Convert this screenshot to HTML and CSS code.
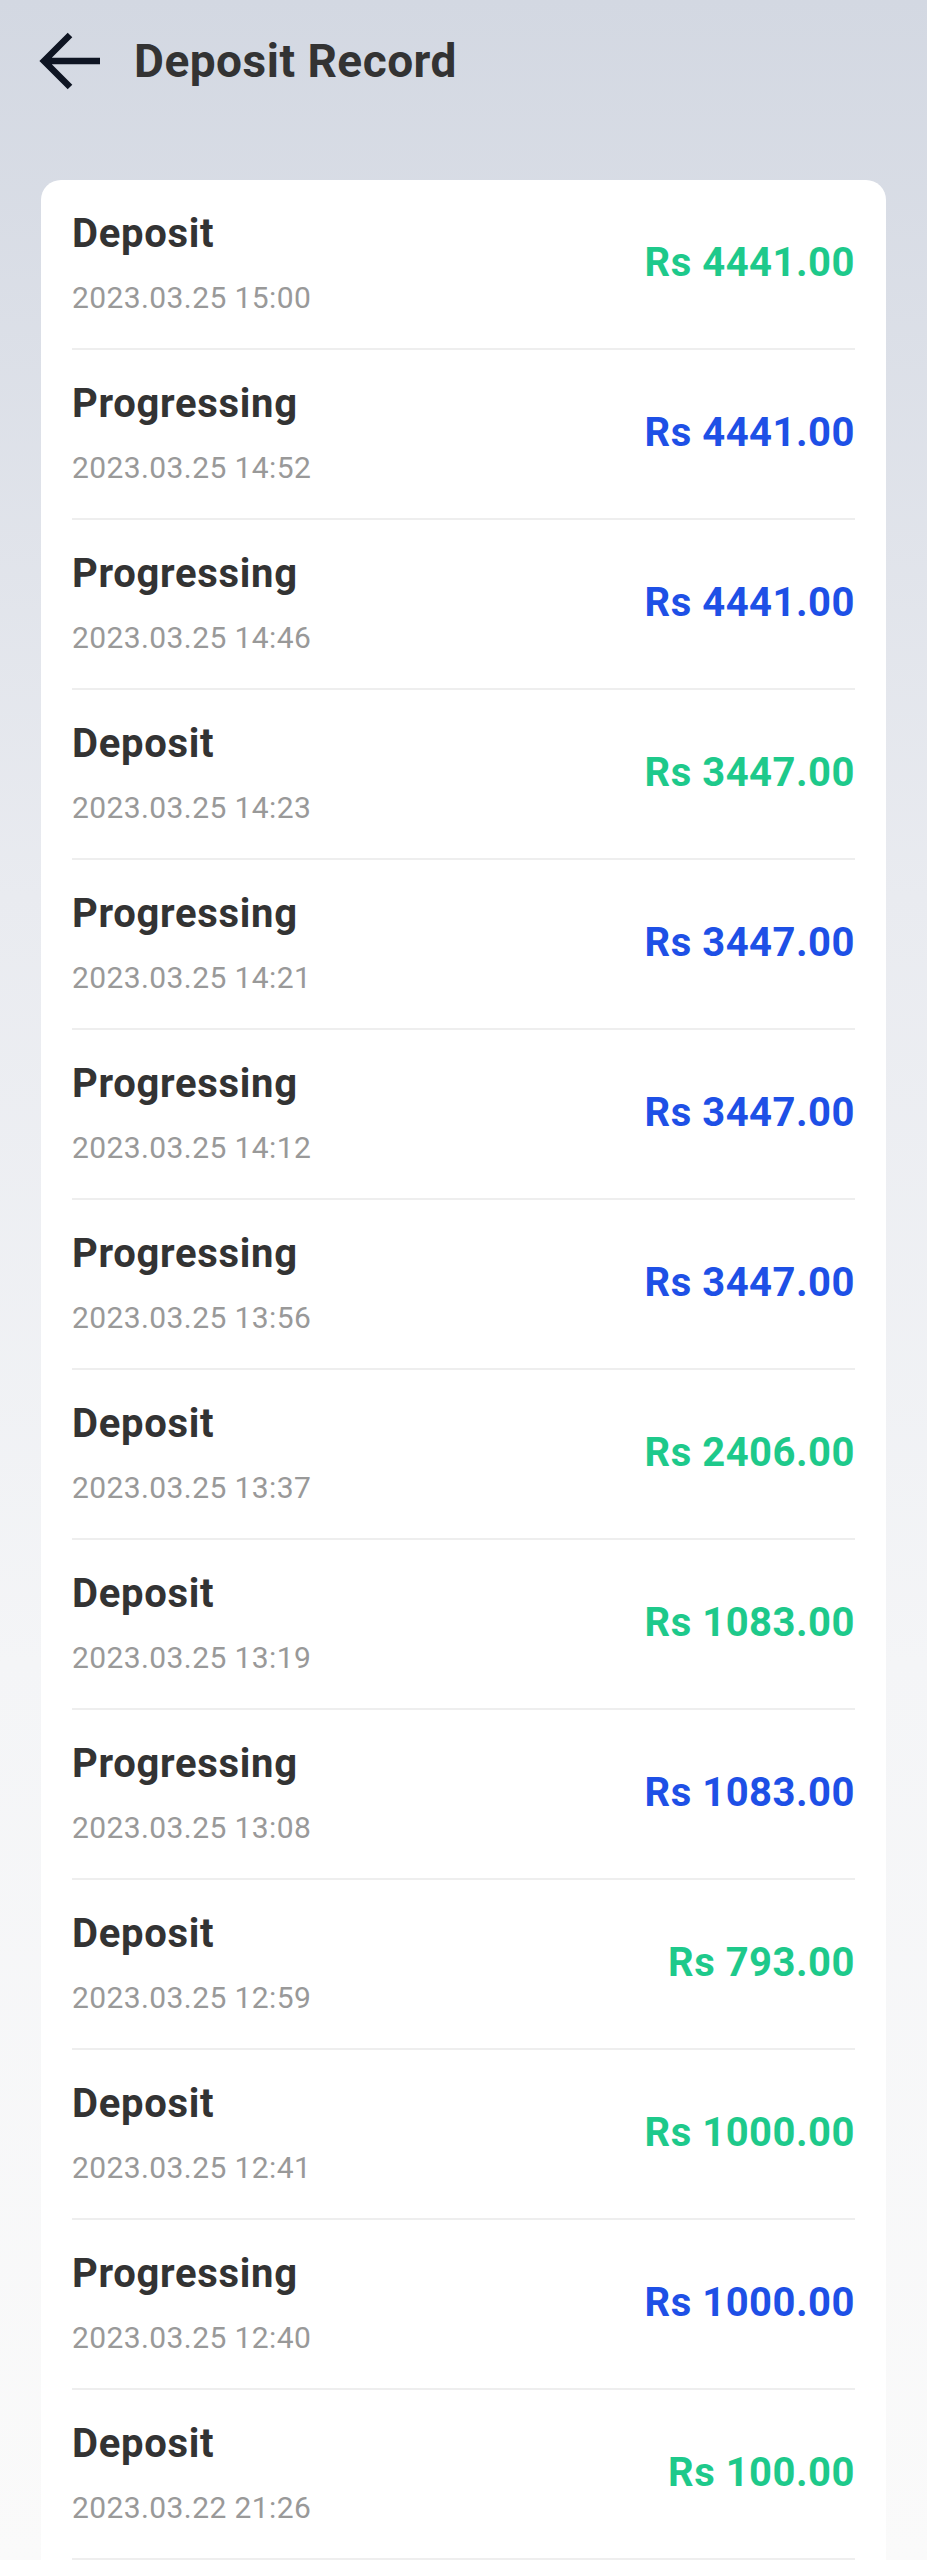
FILE: index.html
```html
<!DOCTYPE html>
<html lang="en">
<head>
<meta charset="utf-8">
<title>Deposit Record</title>
<link rel="stylesheet" href="styles.css">
</head>
<body>
<div class="page">
  <header class="topbar">
    <svg class="back" viewBox="0 0 62 60" width="62" height="60" aria-hidden="true">
      <path d="M32 4 L6 30 L32 56 M6 30 H62" fill="none" stroke="#0f1523" stroke-width="6.5" stroke-linejoin="miter"/>
    </svg>
    <h1 class="title">Deposit Record</h1>
  </header>
  <main class="card">
    <div class="row"><div class="info"><div class="kind">Deposit</div><div class="date">2023.03.25 15:00</div></div><div class="amount green">Rs 4441.00</div></div>
    <div class="row"><div class="info"><div class="kind">Progressing</div><div class="date">2023.03.25 14:52</div></div><div class="amount blue">Rs 4441.00</div></div>
    <div class="row"><div class="info"><div class="kind">Progressing</div><div class="date">2023.03.25 14:46</div></div><div class="amount blue">Rs 4441.00</div></div>
    <div class="row"><div class="info"><div class="kind">Deposit</div><div class="date">2023.03.25 14:23</div></div><div class="amount green">Rs 3447.00</div></div>
    <div class="row"><div class="info"><div class="kind">Progressing</div><div class="date">2023.03.25 14:21</div></div><div class="amount blue">Rs 3447.00</div></div>
    <div class="row"><div class="info"><div class="kind">Progressing</div><div class="date">2023.03.25 14:12</div></div><div class="amount blue">Rs 3447.00</div></div>
    <div class="row"><div class="info"><div class="kind">Progressing</div><div class="date">2023.03.25 13:56</div></div><div class="amount blue">Rs 3447.00</div></div>
    <div class="row"><div class="info"><div class="kind">Deposit</div><div class="date">2023.03.25 13:37</div></div><div class="amount green">Rs 2406.00</div></div>
    <div class="row"><div class="info"><div class="kind">Deposit</div><div class="date">2023.03.25 13:19</div></div><div class="amount green">Rs 1083.00</div></div>
    <div class="row"><div class="info"><div class="kind">Progressing</div><div class="date">2023.03.25 13:08</div></div><div class="amount blue">Rs 1083.00</div></div>
    <div class="row"><div class="info"><div class="kind">Deposit</div><div class="date">2023.03.25 12:59</div></div><div class="amount green">Rs 793.00</div></div>
    <div class="row"><div class="info"><div class="kind">Deposit</div><div class="date">2023.03.25 12:41</div></div><div class="amount green">Rs 1000.00</div></div>
    <div class="row"><div class="info"><div class="kind">Progressing</div><div class="date">2023.03.25 12:40</div></div><div class="amount blue">Rs 1000.00</div></div>
    <div class="row"><div class="info"><div class="kind">Deposit</div><div class="date">2023.03.22 21:26</div></div><div class="amount green">Rs 100.00</div></div>
  </main>
</div>
</body>
</html>
```

FILE: styles.css
```css
* { box-sizing: border-box; }
html, body { margin: 0; padding: 0; }
body {
  font-family: Roboto, "Liberation Sans", Arial, sans-serif;
  background: linear-gradient(180deg, #d3d8e2 0%, #e9ebf0 35%, #f4f5f7 65%, #fafafa 100%);
  min-height: 2560px;
}
.page { height: 2560px; overflow: hidden; }
.topbar {
  height: 122px;
  display: flex;
  align-items: center;
  padding-left: 38px;
  gap: 34px;
}
.back { display: block; flex: none; }
.title {
  margin: 0;
  font-size: 46px;
  line-height: 54px;
  font-weight: 700;
  color: #333333;
  letter-spacing: 0.5px;
}
.card {
  margin: 58px 41px 0;
  background: #ffffff;
  border-radius: 20px 20px 0 0;
  padding: 0 31px;
}
.row {
  height: 170px;
  border-bottom: 2px solid #eeeeee;
  display: flex;
  align-items: center;
  justify-content: space-between;
  padding: 0 0 2px;
}
.info { display: flex; flex-direction: column; }
.kind {
  font-size: 40px;
  line-height: 48px;
  font-weight: 700;
  color: #333333;
  letter-spacing: 0.7px;
}
.date {
  margin-top: 22px;
  font-size: 30px;
  line-height: 36px;
  color: #999999;
  letter-spacing: 0.4px;
}
.amount {
  font-size: 40px;
  line-height: 48px;
  font-weight: 700;
  letter-spacing: 0.5px;
}
.green { color: #1ec98b; }
.blue { color: #1e50e6; }
```
